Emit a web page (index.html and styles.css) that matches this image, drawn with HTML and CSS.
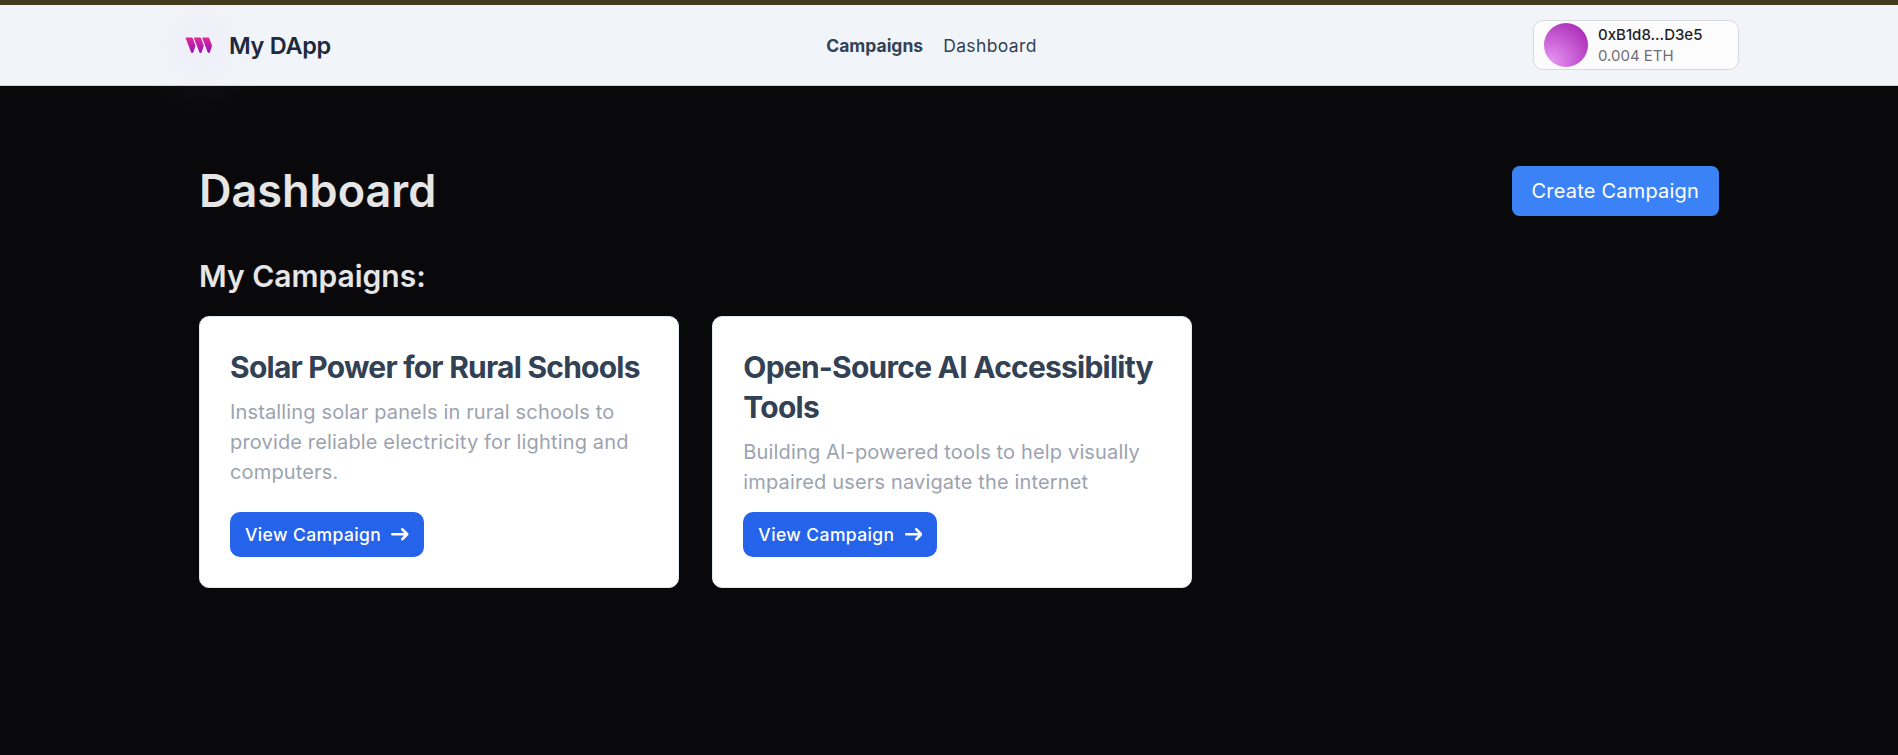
FILE: index.html
```html
<!DOCTYPE html>
<html lang="en">
<head>
<meta charset="utf-8">
<title>My DApp</title>
<link rel="stylesheet" href="styles.css">
</head>
<body>
<header class="navbar">
  <div class="navbar-inner">
    <a class="brand">
      <svg class="brand-logo" viewBox="0 0 40 40">
        <defs>
          <linearGradient id="brandFill" gradientUnits="userSpaceOnUse" x1="0" y1="12" x2="0" y2="28">
            <stop offset="0" stop-color="#e32b92"/>
            <stop offset="1" stop-color="#9512bd"/>
          </linearGradient>
          <radialGradient id="brandGlow">
            <stop offset="0" stop-color="#d879e9" stop-opacity="0.045"/>
            <stop offset="1" stop-color="#d879e9" stop-opacity="0"/>
          </radialGradient>
        </defs>
        <circle cx="22" cy="20" r="72" fill="url(#brandGlow)"/>
        <g fill="url(#brandFill)">
          <path d="M7.3 12.4H12.6Q13.3 12.4 13.6 13L16.2 20Q16.5 20.9 16.2 21.7L14.3 27.2Q14 27.9 13.2 27.9Q12.4 27.9 12.1 27.2L6.7 13.3Q6.5 12.4 7.3 12.4Z"/>
          <path d="M15.6 12.4H20.9Q21.6 12.4 21.9 13L24.5 20Q24.8 20.9 24.5 21.7L22.6 27.2Q22.3 27.9 21.5 27.9Q20.7 27.9 20.4 27.2L15 13.3Q14.8 12.4 15.6 12.4Z"/>
          <path d="M23.9 12.4H29.2Q29.9 12.4 30.2 13L32.8 20Q33.1 20.9 32.8 21.7L30.9 27.2Q30.6 27.9 29.8 27.9Q29 27.9 28.7 27.2L23.3 13.3Q23.1 12.4 23.9 12.4Z"/>
        </g>
      </svg>
      <span class="brand-name">My DApp</span>
    </a>
    <nav class="links">
      <a class="link link-active">Campaigns</a>
      <a class="link">Dashboard</a>
    </nav>
    <div class="wallet">
      <span class="avatar"></span>
      <div class="wallet-text">
        <span class="address">0xB1d8...D3e5</span>
        <span class="balance">0.004 ETH</span>
      </div>
    </div>
  </div>
</header>
<main class="page">
  <div class="page-head">
    <h1 class="page-title">Dashboard</h1>
    <button class="create">Create Campaign</button>
  </div>
  <h2 class="section-title">My Campaigns:</h2>
  <div class="grid">
    <article class="card">
      <h3 class="card-title">Solar Power for Rural Schools</h3>
      <p class="card-text">Installing solar panels in rural schools to provide reliable electricity for lighting and computers.</p>
      <a class="view">View Campaign
        <svg class="arrow" viewBox="0 0 14 10"><path d="M1 5h12m0 0L9 1m4 4L9 9"/></svg>
      </a>
    </article>
    <article class="card">
      <h3 class="card-title">Open-Source AI Accessibility Tools</h3>
      <p class="card-text">Building AI-powered tools to help visually impaired users navigate the internet</p>
      <a class="view">View Campaign
        <svg class="arrow" viewBox="0 0 14 10"><path d="M1 5h12m0 0L9 1m4 4L9 9"/></svg>
      </a>
    </article>
  </div>
</main>
</body>
</html>
```
FILE: styles.css
```css
* { box-sizing: border-box; margin: 0; padding: 0; }
html { font-size: 20px; }
body {
  height: 755px;
  overflow: hidden;
  background: #09090b;
  border-top: 5px solid #433a20;
  color: #e6e6e6;
  font-family: Inter, "Liberation Sans", sans-serif;
  line-height: 1.5;
}
.navbar {
  height: 81px;
  background: #f1f5f9;
  border-bottom: 1px solid #cbd5e1;
}
.navbar-inner {
  display: grid;
  grid-template-columns: 1fr auto 1fr;
  align-items: center;
  width: 1560px;
  height: 80px;
  margin-left: 179px;
}
.brand { display: flex; align-items: center; gap: 10px; }
.brand-logo { width: 40px; height: 40px; overflow: visible; }
.brand-name {
  padding-top: 1px;
  color: #1e293b;
  font-size: 23.5px;
  line-height: 35px;
  font-weight: 600;
  letter-spacing: -0.3px;
}
.links { display: flex; gap: 20px; color: #334155; margin-right: 55px; }
.link { font-size: 17.5px; line-height: 25px; letter-spacing: 0.38px; }
.link-active { font-weight: 700; letter-spacing: 0; }
.wallet {
  display: flex;
  align-items: center;
  justify-self: end;
  gap: 10px;
  width: 206px;
  height: 50px;
  padding: 0 10px;
  border: 1px solid #dad9e0;
  border-radius: 10px;
  background: #fdfcfd;
}
.avatar {
  width: 44px;
  height: 44px;
  border-radius: 50%;
  background: radial-gradient(circle at 15% 90%, #e796f3 0%, #a21caf 100%);
}
.wallet-text { display: flex; flex-direction: column; gap: 3px; }
.address { color: #211f26; font-size: 15px; line-height: 18px; font-weight: 500; }
.balance { color: #6f6d78; font-size: 15px; line-height: 18px; }
.page { width: 1520px; margin: 80px 0 0 199px; }
.page-head { display: flex; justify-content: space-between; align-items: center; }
.page-title { font-size: 45px; line-height: 50px; font-weight: 600; }
.create {
  height: 50px;
  padding: 10px 20px;
  border: 0;
  border-radius: 7.5px;
  background: #3b82f6;
  color: #fff;
  font: inherit;
  letter-spacing: 0.2px;
}
.section-title { margin-top: 40px; font-size: 30px; line-height: 40px; font-weight: 600; }
.grid { display: grid; grid-template-columns: repeat(3, 1fr); gap: 20px; margin-top: 20px; }
.card {
  display: flex;
  flex-direction: column;
  align-items: flex-start;
  width: 480px;
  padding: 30px;
  border: 1px solid #e2e8f0;
  border-radius: 10px;
  background: #fff;
}
.card-title {
  margin-bottom: 10px;
  color: #334155;
  font-size: 30px;
  line-height: 40px;
  font-weight: 700;
  letter-spacing: -0.0255em;
}
.card-text { margin-bottom: 15px; color: #9ca3af; letter-spacing: 0.15px; }
.view {
  display: inline-flex;
  align-items: center;
  gap: 10px;
  height: 45px;
  margin-top: auto;
  padding: 10px 15px;
  border-radius: 10px;
  background: #2563eb;
  color: #fff;
  font-size: 17.5px;
  line-height: 25px;
  font-weight: 500;
  letter-spacing: 0.4px;
}
.arrow {
  width: 17.5px;
  height: 12.5px;
  fill: none;
  stroke: currentColor;
  stroke-width: 2;
  stroke-linecap: round;
  stroke-linejoin: round;
}
```
